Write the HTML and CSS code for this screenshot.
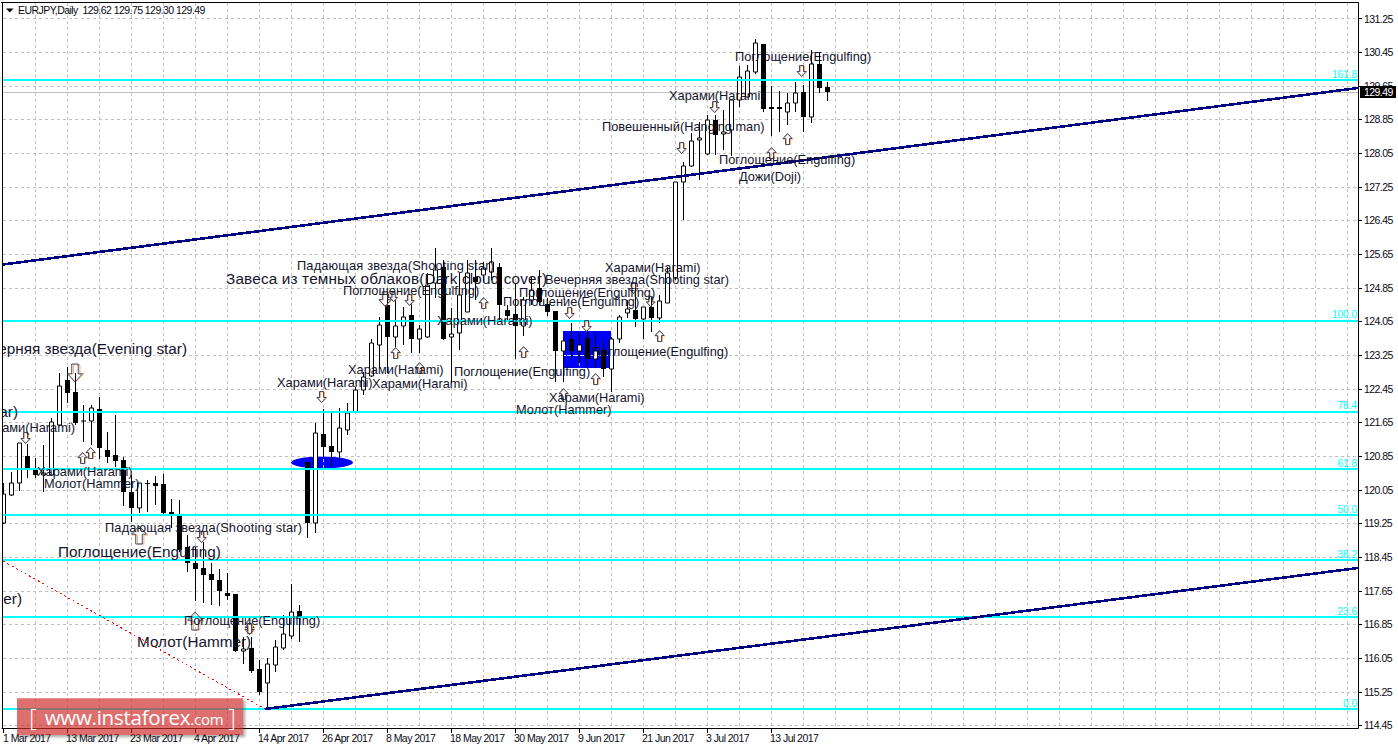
FILE: index.html
```html
<!DOCTYPE html>
<html lang="ru">
<head>
<meta charset="utf-8">
<title>EURJPY,Daily</title>
<link rel="stylesheet" href="styles.css">
</head>
<body>
<div class="terminal">
<svg class="chart" width="1398" height="749" viewBox="0 0 1398 749" xmlns="http://www.w3.org/2000/svg">
  <defs>
    <symbol id="up" viewBox="0 0 11 12">
      <path class="arrow-fringe" d="M6 1L11 6H8.500V11.500H4.500V6H1Z"/>
      <path class="arrow-main" d="M5.500 .5L10 5.500H7.500V11.500H3.500V5.500H1Z"/>
    </symbol>
    <symbol id="down" viewBox="0 0 11 12">
      <path class="arrow-fringe" d="M6 11.500L11 6.500H8.500V1H4.500V6.500H1Z"/>
      <path class="arrow-main" d="M5.500 11.500L10 6.500H7.500V.5H3.500V6.500H1Z"/>
    </symbol>
    <clipPath id="plot"><rect x="3" y="3" width="1355" height="725"/></clipPath>
  </defs>

  <g clip-path="url(#plot)">
    <ellipse class="blue-obj" cx="322" cy="462.500" rx="31" ry="6"/>
    <rect class="blue-obj" x="563" y="331" width="48" height="37"/>

    <path class="grid" d="M35.500 3V728M67.500 3V728M99.500 3V728M131.500 3V728M163.500 3V728M195.500 3V728M227.500 3V728M259.500 3V728M291.500 3V728M323.500 3V728M355.500 3V728M387.500 3V728M419.500 3V728M451.500 3V728M483.500 3V728M515.500 3V728M547.500 3V728M579.500 3V728M611.500 3V728M643.500 3V728M675.500 3V728M707.500 3V728M739.500 3V728M771.500 3V728M803.500 3V728M835.500 3V728M867.500 3V728M899.500 3V728M931.500 3V728M963.500 3V728M995.500 3V728M1027.500 3V728M1059.500 3V728M1091.500 3V728M1123.500 3V728M1155.500 3V728M1187.500 3V728M1219.500 3V728M1251.500 3V728M1283.500 3V728M1315.500 3V728M1347.500 3V728"/>
    <path class="grid" d="M3 18.500H1358M3 52.500H1358M3 86.500H1358M3 119.500H1358M3 153.500H1358M3 187.500H1358M3 220.500H1358M3 254.500H1358M3 288.500H1358M3 321.500H1358M3 355.500H1358M3 389.500H1358M3 422.500H1358M3 456.500H1358M3 490.500H1358M3 523.500H1358M3 557.500H1358M3 591.500H1358M3 624.500H1358M3 658.500H1358M3 692.500H1358M3 725.500H1358"/>
    <path class="grid-white" d="M563 355.500H611"/>
    <path class="bid" d="M3 92.500H1358"/>

    <path class="wick" d="M3.500 483V524M11.500 472V496M19.500 443V491M27.500 444V478M35.500 458V478M43.500 445V492M51.500 418V476M59.500 373V426M67.500 367V403M75.500 373V425M83.500 405V442M91.500 405V445M99.500 397V459M107.500 432V463M115.500 415V467M123.500 457V506M131.500 475V522M139.500 483V513M147.500 480V512M155.500 476V505M163.500 474V514M171.500 499V528M179.500 500V552M187.500 535V572M195.500 547V601M203.500 542V603M211.500 563V605M219.500 569V606M227.500 573V600M235.500 594V652M243.500 637V664M251.500 637V673M259.500 660V695M267.500 658V708M275.500 640V672M283.500 615V650M291.500 584V639M299.500 605V642M307.500 462V538M315.500 423V533M323.500 409V457M331.500 413V466M339.500 408V460M347.500 403V435M355.500 387V413M363.500 372V395M371.500 339V377M379.500 317V368M387.500 293V373M395.500 300V347M403.500 307V345M411.500 303V353M419.500 325V353M427.500 273V338M435.500 248V298M443.500 260V340M451.500 308V383M459.500 273V350M467.500 260V312M475.500 260V300M483.500 262V282M491.500 248V280M499.500 263V320M507.500 305V320M515.500 283V359M523.500 297V336M531.500 277V305M539.500 270V305M547.500 298V316M555.500 311V382M563.500 338V382M571.500 323V358M579.500 333V363M587.500 330V365M595.500 333V367M603.500 340V377M611.500 337V392M619.500 315V343M627.500 300V318M635.500 283V327M643.500 307V339M651.500 297V332M659.500 295V323M667.500 267V303M675.500 182V280M683.500 162V220M691.500 133V167M699.500 122V180M707.500 115V155M715.500 115V155M723.500 110V150M731.500 100V156M739.500 66V107M747.500 65V97M755.500 39V74M763.500 44V112M771.500 86V136M779.500 91V132M787.500 93V125M795.500 82V112M803.500 85V132M811.500 50V123M819.500 52V93M827.500 82V101"/>

    <path class="body-white" d="M1.500 494h4v29h-4zM9.500 483h4v12h-4zM17.500 443h4v40h-4zM41.500 473h4v2h-4zM49.500 422h4v53h-4zM57.500 386h4v39h-4zM89.500 408h4v13h-4zM137.500 483h4v25h-4zM241.500 649h4v2h-4zM265.500 664h4v19h-4zM273.500 647h4v18h-4zM281.500 634h4v14h-4zM289.500 612h4v24h-4zM313.500 433h4v90h-4zM337.500 428h4v24h-4zM345.500 413h4v17h-4zM353.500 390h4v22h-4zM361.500 377h4v13h-4zM369.500 343h4v33h-4zM377.500 325h4v20h-4zM393.500 326h4v11h-4zM401.500 317h4v9h-4zM417.500 329h4v10h-4zM425.500 285h4v52h-4zM433.500 270h4v13h-4zM449.500 334h4v3h-4zM457.500 295h4v38h-4zM465.500 273h4v39h-4zM481.500 268h4v7h-4zM489.500 262h4v10h-4zM521.500 300h4v26h-4zM529.500 290h4v10h-4zM561.500 341h4v10h-4zM577.500 345h4v6h-4zM593.500 351h4v8h-4zM609.500 339h4v30h-4zM617.500 317h4v22h-4zM625.500 309h4v4h-4zM641.500 307h4v12h-4zM657.500 301h4v17h-4zM665.500 273h4v30h-4zM673.500 182h4v96h-4zM681.500 166h4v16h-4zM689.500 141h4v25h-4zM697.500 138h4v2h-4zM705.500 120h4v34h-4zM721.500 132h4v2h-4zM729.500 100h4v30h-4zM737.500 77h4v23h-4zM745.500 71h4v26h-4zM753.500 43h4v29h-4zM785.500 103h4v9h-4zM793.500 93h4v10h-4zM809.500 64h4v53h-4z"/>

    <path class="body-black" d="M27.500 456V469M35.500 470V475M67.500 380V393M75.500 392V423M83.500 420.500V421.500M99.500 409V448M107.500 450V457M115.500 455V461M123.500 460V492M131.500 492V508M147.500 483V484M155.500 483V486M163.500 484V513M171.500 512V514M179.500 516V550M187.500 547V563M195.500 563V569M203.500 568V575M211.500 574V580M219.500 580V591M227.500 593V596M235.500 594V651M251.500 648V671M259.500 669V692M299.500 611V616M307.500 462V523M323.500 434V447M331.500 446V452M387.500 305V337M411.500 315V339M443.500 267V339M475.500 277V282M499.500 267V305M507.500 310V316M515.500 314V326M539.500 288V302M547.500 304V312M555.500 311V351M571.500 339V351M587.500 338V359M603.500 350V369M635.500 310V319M651.500 307V318M715.500 120V135M763.500 44V109M771.500 107V109M779.500 107V109M803.500 92V117M819.500 64V88M827.500 87V92"/>

    <path class="fib-level" d="M3 80H1358M3 321H1358M3 412H1358M3 469H1358M3 515H1358M3 560H1358M3 617H1358M3 709H1358"/>
    <path class="trend" d="M3 264.500L1358 88M265 709L1358 568"/>

    <g class="arrows">
      <use href="#down" x="20" y="432" width="11" height="12"/>
      <use href="#up" x="77" y="452" width="11" height="12"/>
      <use href="#up" x="85" y="447" width="11" height="12"/>
      <use href="#down" x="316" y="391" width="11" height="12"/>
      <use href="#down" x="196" y="531" width="11" height="12"/>
      <use href="#down" x="66" y="363" width="18" height="20"/>
      <use href="#up" x="130" y="525" width="18" height="20"/>
      <use href="#up" x="186" y="611" width="18" height="20"/>
      <use href="#up" x="244" y="622" width="11" height="12"/>
      <use href="#down" x="244" y="623" width="11" height="12"/>
      <use href="#down" x="376" y="291" width="18" height="16"/>
      <use href="#down" x="388" y="292" width="11" height="10"/>
      <use href="#down" x="404" y="294" width="11" height="12"/>
      <use href="#up" x="390" y="347" width="11" height="12"/>
      <use href="#up" x="414" y="362" width="11" height="12"/>
      <use href="#up" x="478" y="297" width="11" height="12"/>
      <use href="#up" x="518" y="346" width="11" height="12"/>
      <use href="#down" x="564" y="307" width="11" height="12"/>
      <use href="#up" x="558" y="388" width="11" height="12"/>
      <use href="#down" x="581" y="320" width="11" height="12"/>
      <use href="#up" x="590" y="373" width="11" height="12"/>
      <use href="#up" x="654" y="330" width="11" height="12"/>
      <use href="#down" x="645" y="296" width="11" height="11"/>
      <use href="#down" x="628" y="282" width="11" height="12"/>
      <use href="#down" x="676" y="142" width="11" height="12"/>
      <use href="#down" x="709" y="101" width="11" height="12"/>
      <use href="#up" x="782" y="133" width="11" height="12"/>
      <use href="#up" x="766" y="147" width="11" height="12"/>
      <use href="#down" x="796" y="65" width="11" height="12"/>
    </g>

    <g class="pattern">
      <text x="735" y="61">Поглощение(Engulfing)</text>
      <text x="669" y="100">Харами(Harami)</text>
      <text x="602" y="131">Повешенный(Hanging man)</text>
      <text x="719" y="164">Поглощение(Engulfing)</text>
      <text x="739" y="181">Дожи(Doji)</text>
      <text class="wide" x="297" y="270">Падающая звезда(Shooting star)</text>
      <text x="605" y="272">Харами(Harami)</text>
      <text x="545" y="284">Вечерняя звезда(Shooting star)</text>
      <text x="343" y="295">Поглощение(Engulfing)</text>
      <text x="519" y="297">Поглощение(Engulfing)</text>
      <text x="503" y="306">Поглощение(Engulfing)</text>
      <text x="437" y="325">Харами(Harami)</text>
      <text x="592" y="356">Поглощение(Engulfing)</text>
      <text x="348" y="374">Харами(Harami)</text>
      <text x="454" y="376">Поглощение(Engulfing)</text>
      <text x="277" y="387">Харами(Harami)</text>
      <text x="372" y="388">Харами(Harami)</text>
      <text x="549" y="402">Харами(Harami)</text>
      <text x="516" y="414">Молот(Hammer)</text>
      <text class="end" x="75" y="432">Харами(Harami)</text>
      <text x="37" y="476">Харами(Harami)</text>
      <text x="44" y="488">Молот(Hammer)</text>
      <text class="wide" x="105" y="532">Падающая звезда(Shooting star)</text>
      <text x="184" y="625">Поглощение(Engulfing)</text>
    </g>
    <g class="pattern big">
      <text class="wide" x="226" y="284">Завеса из темных облаков(Dark cloud cover)</text>
      <text class="end" x="187" y="354">Вечерняя звезда(Evening star)</text>
      <text class="end" x="18" y="417">Падающая звезда(Shooting star)</text>
      <text x="58" y="557">Поглощение(Engulfing)</text>
      <text class="end" x="22" y="604">Молот(Hammer)</text>
      <text x="137" y="647">Молот(Hammer)</text>
    </g>

    <g class="fib-label">
      <text x="1357" y="78">161.8</text>
      <text x="1357" y="318">100.0</text>
      <text x="1357" y="409">78.4</text>
      <text x="1357" y="467">61.8</text>
      <text x="1357" y="513">50.0</text>
      <text x="1357" y="558">38.2</text>
      <text x="1357" y="615">23.6</text>
      <text x="1357" y="707">0.0</text>
    </g>
    <path class="fib-dots" d="M3 561L265 709"/>
  </g>

  <path class="frame" d="M2.500 2V728.500M1 2.500H1358.500V728.500H1.500"/>

  <path class="ticks" d="M1358 18.500H1362M1358 52.500H1362M1358 86.500H1362M1358 119.500H1362M1358 153.500H1362M1358 187.500H1362M1358 220.500H1362M1358 254.500H1362M1358 288.500H1362M1358 321.500H1362M1358 355.500H1362M1358 389.500H1362M1358 422.500H1362M1358 456.500H1362M1358 490.500H1362M1358 523.500H1362M1358 557.500H1362M1358 591.500H1362M1358 624.500H1362M1358 658.500H1362M1358 692.500H1362M1358 725.500H1362M3.500 728V733M67.500 728V733M131.500 728V733M195.500 728V733M259.500 728V733M323.500 728V733M387.500 728V733M451.500 728V733M515.500 728V733M579.500 728V733M643.500 728V733M707.500 728V733M771.500 728V733"/>

  <g class="axis">
    <text x="1364" y="23">131.25</text>
    <text x="1364" y="56">130.45</text>
    <text x="1364" y="90">129.65</text>
    <text x="1364" y="123">128.85</text>
    <text x="1364" y="157">128.05</text>
    <text x="1364" y="191">127.25</text>
    <text x="1364" y="224">126.45</text>
    <text x="1364" y="258">125.65</text>
    <text x="1364" y="292">124.85</text>
    <text x="1364" y="325">124.05</text>
    <text x="1364" y="359">123.25</text>
    <text x="1364" y="393">122.45</text>
    <text x="1364" y="426">121.65</text>
    <text x="1364" y="460">120.85</text>
    <text x="1364" y="494">120.05</text>
    <text x="1364" y="527">119.25</text>
    <text x="1364" y="561">118.45</text>
    <text x="1364" y="595">117.65</text>
    <text x="1364" y="628">116.85</text>
    <text x="1364" y="662">116.05</text>
    <text x="1364" y="696">115.25</text>
    <text x="1364" y="729">114.45</text>
    <text x="3" y="742">1 Mar 2017</text>
    <text x="66" y="742">13 Mar 2017</text>
    <text x="130" y="742">23 Mar 2017</text>
    <text x="194" y="742">4 Apr 2017</text>
    <text x="258" y="742">14 Apr 2017</text>
    <text x="322" y="742">26 Apr 2017</text>
    <text x="386" y="742">8 May 2017</text>
    <text x="450" y="742">18 May 2017</text>
    <text x="514" y="742">30 May 2017</text>
    <text x="578" y="742">9 Jun 2017</text>
    <text x="642" y="742">21 Jun 2017</text>
    <text x="706" y="742">3 Jul 2017</text>
    <text x="770" y="742">13 Jul 2017</text>
  </g>

  <rect class="price-tag" x="1360" y="86" width="36" height="12"/>
  <text class="price-tag-text" x="1364" y="96">129.49</text>

  <path class="title-mark" d="M6 8.500H13.500L9.750 12.500Z"/>
  <text class="title" x="18" y="14">EURJPY,Daily  129.62 129.75 129.30 129.49</text>
</svg>
<div class="promo">
  <span class="bracket">[</span>
  <span class="promo-url">www.instaforex<small>.com</small></span>
  <span class="bracket bracket-end">]</span>
</div>
</div>
</body>
</html>
```
FILE: styles.css
```css
html, body {
  margin: 0;
  padding: 0;
  background: #fff;
}
.terminal {
  position: relative;
  width: 1398px;
  height: 749px;
  overflow: hidden;
}
.chart {
  display: block;
  font-family: "Liberation Sans", Arial, sans-serif;
}
.blue-obj { fill: #0000ff; }
.grid {
  fill: none;
  stroke: #c0c0c0;
  stroke-width: 1;
  stroke-dasharray: 3 3;
}
.grid-white {
  fill: none;
  stroke: #e0e0ff;
  stroke-width: 1;
  stroke-dasharray: 3 3;
}
.bid { fill: none; stroke: #c0c0c0; stroke-width: 1; }
.fib-dots {
  fill: none;
  stroke: #ff0000;
  stroke-width: 1;
  stroke-dasharray: 2 3;
  shape-rendering: crispEdges;
}
.wick { fill: none; stroke: #000; stroke-width: 1; }
.body-white { fill: #fff; stroke: #000; stroke-width: 1; }
.body-black { fill: none; stroke: #000; stroke-width: 5; }
.fib-level { fill: none; stroke: #00ffff; stroke-width: 2; }
.trend {
  fill: none;
  stroke: #000080;
  stroke-width: 2.600;
  shape-rendering: crispEdges;
}
.arrow-fringe {
  fill: none;
  stroke: #f0a040;
  stroke-width: .8;
  vector-effect: non-scaling-stroke;
}
.arrow-main {
  fill: none;
  stroke: #2a3a70;
  stroke-width: .9;
  vector-effect: non-scaling-stroke;
}
.pattern text {
  font-size: 12.800px;
  fill: #14142c;
}
.pattern.big text {
  font-size: 15.300px;
}
.pattern text.end { text-anchor: end; }
.pattern text.wide { letter-spacing: .17px; }
.fib-label text {
  font-size: 10px;
  fill: #00ffff;
  text-anchor: end;
}
.frame { fill: none; stroke: #000; stroke-width: 1; }
.ticks { fill: none; stroke: #000; stroke-width: 1; }
.axis text {
  font-size: 10.500px;
  letter-spacing: -.55px;
  fill: #0a0a14;
}
.price-tag { fill: #000; }
.price-tag-text {
  font-size: 10.500px;
  letter-spacing: -.55px;
  fill: #fff;
}
.title-mark { fill: #000; }
.title {
  font-size: 10.500px;
  letter-spacing: -.55px;
  white-space: pre;
  fill: #0a0a14;
}
.promo {
  position: absolute;
  left: 17px;
  top: 698px;
  width: 226px;
  height: 37px;
  box-sizing: border-box;
  padding-left: 12px;
  display: flex;
  align-items: center;
  gap: 8px;
  background: rgba(207, 43, 43, .68);
  border-top: 1px solid rgba(255, 255, 255, .25);
  box-shadow: 2px 2px 3px rgba(0, 0, 0, .35);
  color: #fff;
  font-family: "Open Sans", "Liberation Sans", sans-serif;
}
.bracket {
  font-size: 24px;
  font-weight: 300;
  line-height: 1;
}
.bracket-end { margin-left: -3px; }
.promo-url {
  font-size: 20.500px;
  letter-spacing: -.25px;
  line-height: 1;
  white-space: nowrap;
}
.promo-url small {
  font-size: 15px;
}
```
